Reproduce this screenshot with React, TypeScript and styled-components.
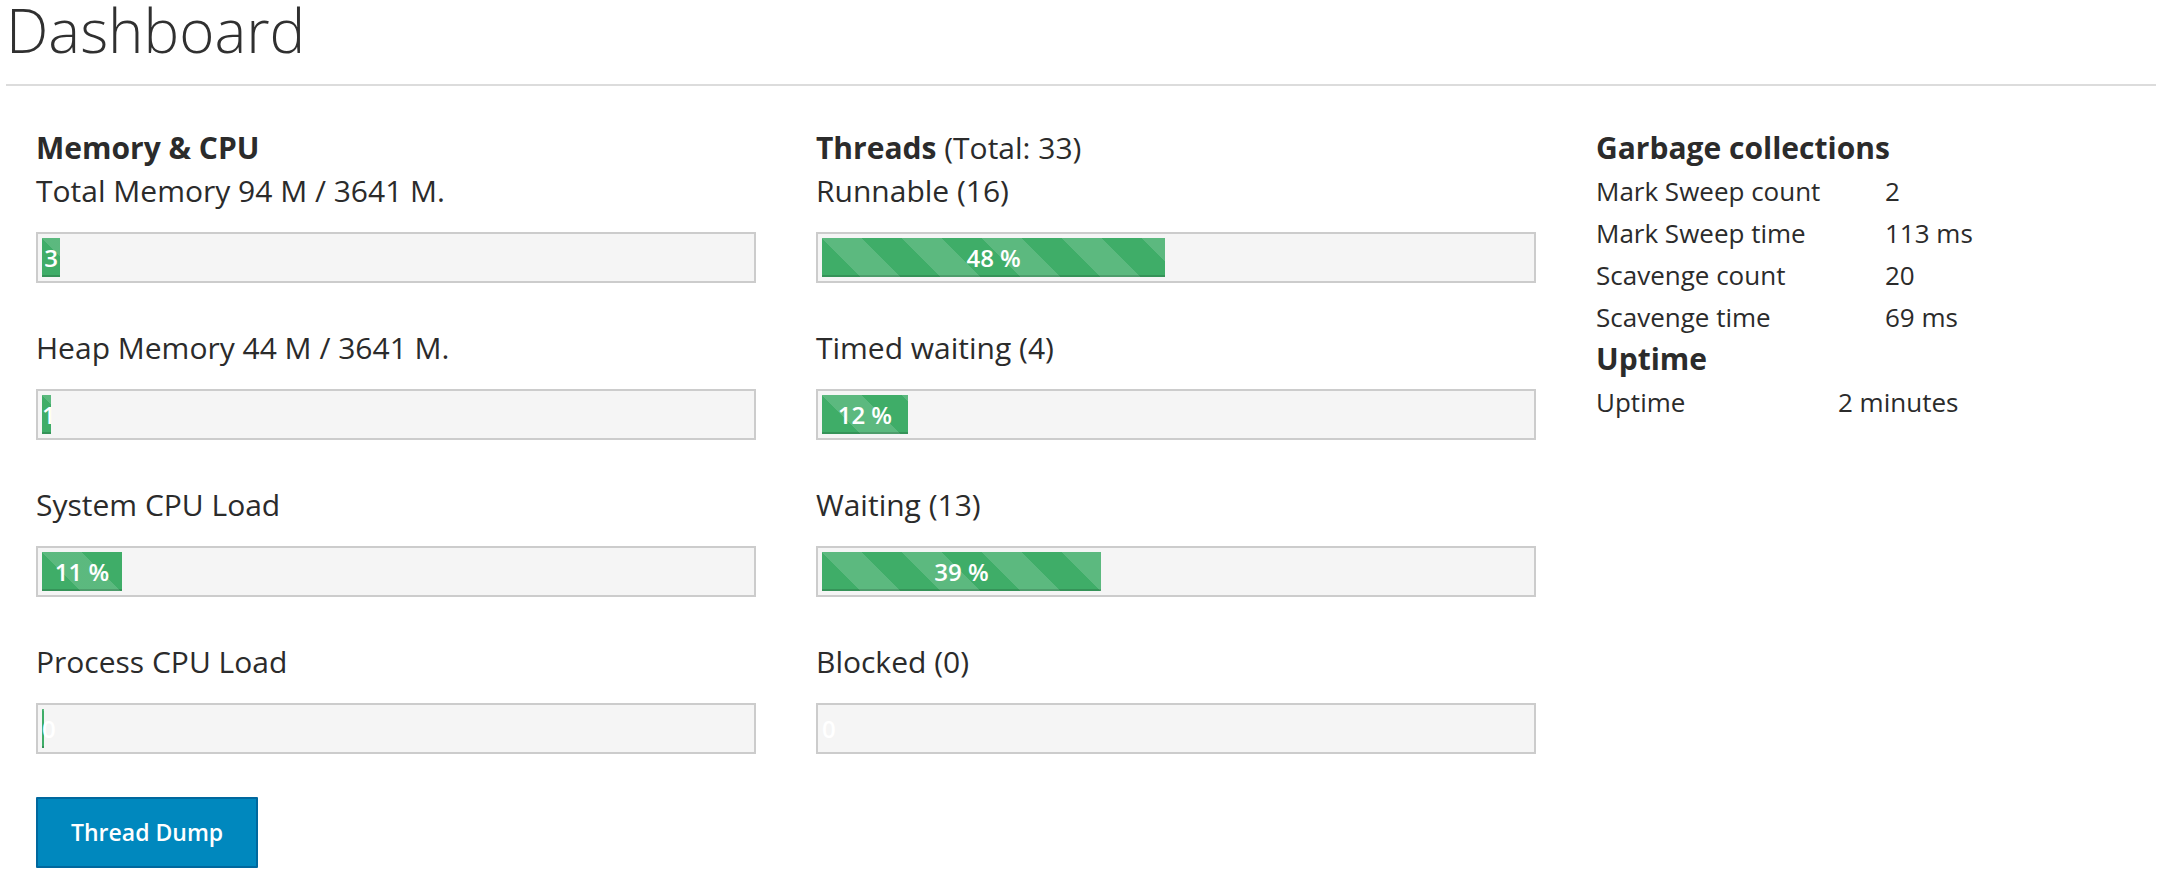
import React from 'react';
import styled, { createGlobalStyle } from 'styled-components';

const GlobalStyle = createGlobalStyle`
  html, body {
    margin: 0;
    padding: 0;
    background: #ffffff;
  }
  body {
    font-family: "Open Sans", "Noto Sans", sans-serif;
    color: #363636;
  }
`;

const Page = styled.div`
  padding: 0 20px 0 6px;
`;

const Title = styled.h1`
  margin: 0;
  font-size: 60px;
  font-weight: 300;
  line-height: 60px;
  color: #303030;
`;

const Divider = styled.hr`
  margin: 24px 0 0;
  height: 0;
  border: 0;
  border-top: 2px solid #dcdcdc;
`;

const Columns = styled.div`
  display: grid;
  grid-template-columns: 780px 780px 1fr;
  margin-top: 40px;
`;

const Column = styled.section<{ $offset?: number }>`
  padding: ${(p) => p.$offset ?? 0}px 30px 0;
  min-width: 0;
`;

const Heading = styled.h3<{ $lh?: number }>`
  margin: 0;
  font-size: 30px;
  font-weight: 700;
  line-height: ${(p) => p.$lh ?? 43}px;
  color: #2b2b2b;
`;

const Light = styled.span`
  font-weight: 400;
`;

const Label = styled.div`
  font-size: 30px;
  line-height: 43px;
  color: #2b2b2b;
`;

const Track = styled.div`
  margin: 20px 0 43px;
  padding: 4px;
  height: 39px;
  overflow: hidden;
  background: #f5f5f5;
  border: 2px solid #cccccc;
`;

const Fill = styled.div`
  height: 39px;
  background-color: #3fad68;
  background-image: linear-gradient(
    45deg,
    rgba(255, 255, 255, 0.15) 25%,
    transparent 25%,
    transparent 50%,
    rgba(255, 255, 255, 0.15) 50%,
    rgba(255, 255, 255, 0.15) 75%,
    transparent 75%,
    transparent
  );
  background-size: 80px 80px;
  box-shadow: inset 0 -2px 0 rgba(0, 0, 0, 0.15);
  color: #ffffff;
  font-size: 24px;
  font-weight: 600;
  line-height: 39px;
  text-align: center;
`;

const Button = styled.button`
  display: inline-block;
  margin: 0;
  padding: 14px 33px;
  border: 2px solid #00689e;
  border-radius: 1px;
  background: #0088be;
  color: #ffffff;
  font-family: "Open Sans", "Noto Sans", sans-serif;
  font-size: 23px;
  font-weight: 600;
  line-height: 39px;
  cursor: pointer;
`;

const StatTable = styled.div<{ $key: number }>`
  display: grid;
  grid-template-columns: ${(p) => p.$key}px auto;
  font-size: 26px;
  line-height: 42px;
  color: #2b2b2b;
  padding-top: 1px;
`;

const Cell = styled.div`
  white-space: nowrap;
`;

type Metric = { label: string; pct: number; text: string };

const memory: Metric[] = [
  { label: 'Total Memory 94 M / 3641 M.', pct: (94 / 3641) * 100, text: '3 %' },
  { label: 'Heap Memory 44 M / 3641 M.', pct: (44 / 3641) * 100, text: '1 %' },
  { label: 'System CPU Load', pct: 11.3, text: '11 %' },
  { label: 'Process CPU Load', pct: 0.3, text: '0 %' },
];

const threads: Metric[] = [
  { label: 'Runnable (16)', pct: (16 / 33) * 100, text: '48 %' },
  { label: 'Timed waiting (4)', pct: (4 / 33) * 100, text: '12 %' },
  { label: 'Waiting (13)', pct: (13 / 33) * 100, text: '39 %' },
  { label: 'Blocked (0)', pct: 0, text: '0 %' },
];

const gc: [string, string][] = [
  ['Mark Sweep count', '2'],
  ['Mark Sweep time', '113 ms'],
  ['Scavenge count', '20'],
  ['Scavenge time', '69 ms'],
];

function Bar({ m }: { m: Metric }) {
  return (
    <>
      <Label>{m.label}</Label>
      <Track>
        <Fill style={{ width: `${m.pct}%` }}>{m.text}</Fill>
      </Track>
    </>
  );
}

export default function App() {
  return (
    <>
      <GlobalStyle />
      <Page>
        <Title>Dashboard</Title>
        <Divider />
        <Columns>
          <Column>
            <Heading>Memory &amp; CPU</Heading>
            {memory.map((m) => (
              <Bar key={m.label} m={m} />
            ))}
            <Button type="button">Thread Dump</Button>
          </Column>
          <Column>
            <Heading>
              Threads <Light>(Total: 33)</Light>
            </Heading>
            {threads.map((m) => (
              <Bar key={m.label} m={m} />
            ))}
          </Column>
          <Column $offset={1}>
            <Heading $lh={42}>Garbage collections</Heading>
            <StatTable $key={289}>
              {gc.map(([k, v]) => (
                <React.Fragment key={k}>
                  <Cell>{k}</Cell>
                  <Cell>{v}</Cell>
                </React.Fragment>
              ))}
            </StatTable>
            <Heading $lh={42}>Uptime</Heading>
            <StatTable $key={242}>
              <Cell>Uptime</Cell>
              <Cell>2 minutes</Cell>
            </StatTable>
          </Column>
        </Columns>
      </Page>
    </>
  );
}
